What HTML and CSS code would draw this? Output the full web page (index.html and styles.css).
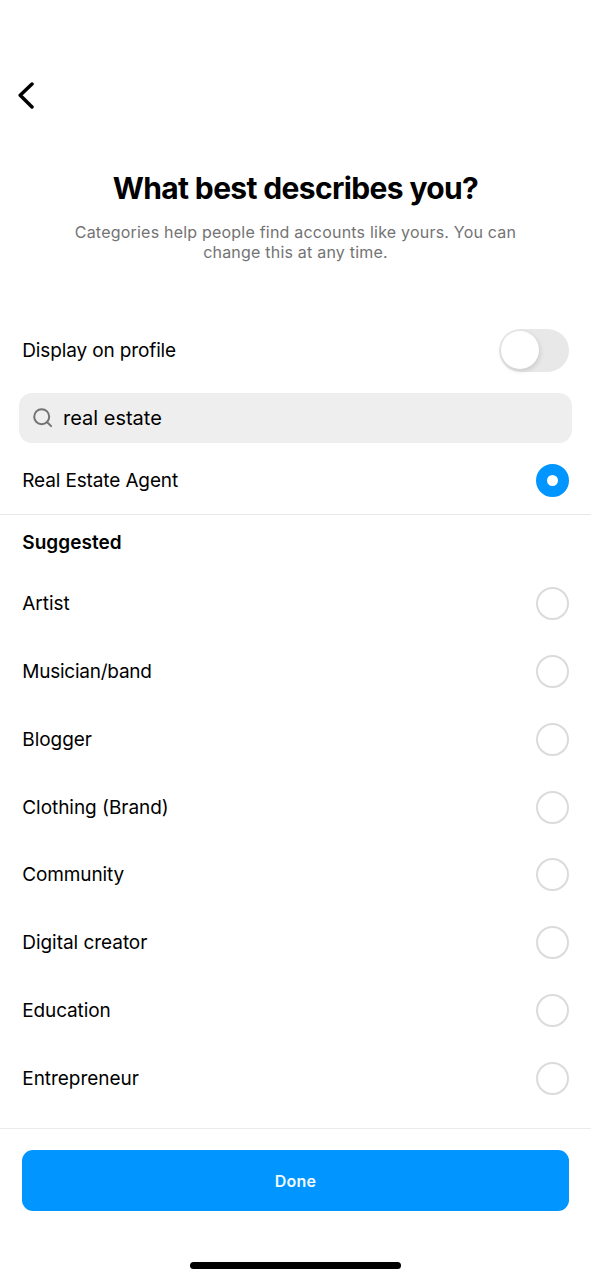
FILE: index.html
```html
<!DOCTYPE html>
<html lang="en">
<head>
<meta charset="utf-8">
<title>What best describes you?</title>
<link rel="stylesheet" href="styles.css">
</head>
<body>
<main class="screen">
  <nav class="nav"><svg class="back" width="18" height="28" viewBox="0 0 18 28"><path d="M15 3 3.200 14.300 15 26" fill="none" stroke="#000" stroke-width="3.500" stroke-linecap="round" stroke-linejoin="round"/></svg></nav>
  <header class="intro">
    <h1 class="title">What best describes you?</h1>
    <p class="sub">Categories help people find accounts like yours. You can<br>change this at any time.</p>
  </header>
  <div class="row display"><span class="tight">Display on profile</span><span class="toggle"><span class="knob"></span></span></div>
  <div class="search"><svg width="20" height="20" viewBox="0 0 20 20"><g fill="none" stroke="#737373" stroke-width="2" stroke-linecap="round"><circle cx="8.700" cy="8.700" r="7.500"/><path d="m14.200 14.200 3.900 3.900"/></g></svg><span class="query">real estate</span></div>
  <div class="row agent"><span class="tight">Real Estate Agent</span><span class="radio checked"></span></div>
  <h2 class="heading">Suggested</h2>
  <div class="list">
    <div class="row"><span>Artist</span><span class="radio"></span></div>
    <div class="row"><span class="tighter">Musician/band</span><span class="radio"></span></div>
    <div class="row"><span>Blogger</span><span class="radio"></span></div>
    <div class="row"><span>Clothing (Brand)</span><span class="radio"></span></div>
    <div class="row"><span class="tight">Community</span><span class="radio"></span></div>
    <div class="row"><span>Digital creator</span><span class="radio"></span></div>
    <div class="row"><span class="tight">Education</span><span class="radio"></span></div>
    <div class="row"><span>Entrepreneur</span><span class="radio"></span></div>
  </div>
  <footer class="footer"><button class="done">Done</button><div class="home"></div></footer>
</main>
</body>
</html>
```
FILE: styles.css
```css
* { box-sizing: border-box; }
body { margin: 0; background: #fff; color: #000; font-family: Inter, "Liberation Sans", sans-serif; font-size: 19px; }
.screen { width: 591px; height: 1280px; overflow: hidden; display: flex; flex-direction: column; }
.nav { height: 169px; padding: 81px 0 0 17px; flex: none; }
.back { display: block; }
.intro { height: 156px; text-align: center; flex: none; }
.title { margin: 0; font-size: 30px; line-height: 38px; font-weight: 700; letter-spacing: -0.64px; }
.sub { margin: 15px 0 0; font-size: 16px; line-height: 20px; color: #737373; letter-spacing: 0.21px; }
.row { display: flex; align-items: center; justify-content: space-between; height: 67.75px; padding: 0 22px 0 22.25px; flex: none; letter-spacing: -0.04px; }
.tight { letter-spacing: -0.13px; }
.tighter { letter-spacing: -0.24px; }
.display { height: 51px; }
.toggle { width: 70px; height: 43px; border-radius: 22px; background: #e8e8e8; padding: 2px; }
.knob { display: block; width: 38px; height: 38px; border-radius: 50%; background: #fff; box-shadow: 1px 2px 5px #0002; }
.search { margin: 17px 19px 0; height: 50px; border-radius: 13px; background: #eee; display: flex; align-items: center; padding-left: 14px; gap: 10px; flex: none; }
.query { font-size: 20px; }
.agent { height: 72px; padding-top: 4px; border-bottom: 1px solid #e8e8e8; }
.radio { width: 33px; height: 33px; border: 2px solid #dbdbdb; border-radius: 50%; }
.checked { border: 11px solid #0095ff; }
.heading { margin: 0; height: 55px; padding: 0 22.25px; font-size: 19px; line-height: 56px; font-weight: 600; letter-spacing: 0.05px; flex: none; }
.list { height: 558px; flex: none; }
.footer { border-top: 1px solid #ebebeb; padding: 21px 22px 0; flex: 1; display: flex; flex-direction: column; align-items: center; }
.done { width: 100%; height: 61px; border: 0; border-radius: 11px; background: #0095ff; color: #f2faff; font: 600 16px Inter, "Liberation Sans", sans-serif; letter-spacing: 0.2px; }
.home { width: 211px; height: 7px; margin-top: 51px; border-radius: 4px; background: #000; }
```
